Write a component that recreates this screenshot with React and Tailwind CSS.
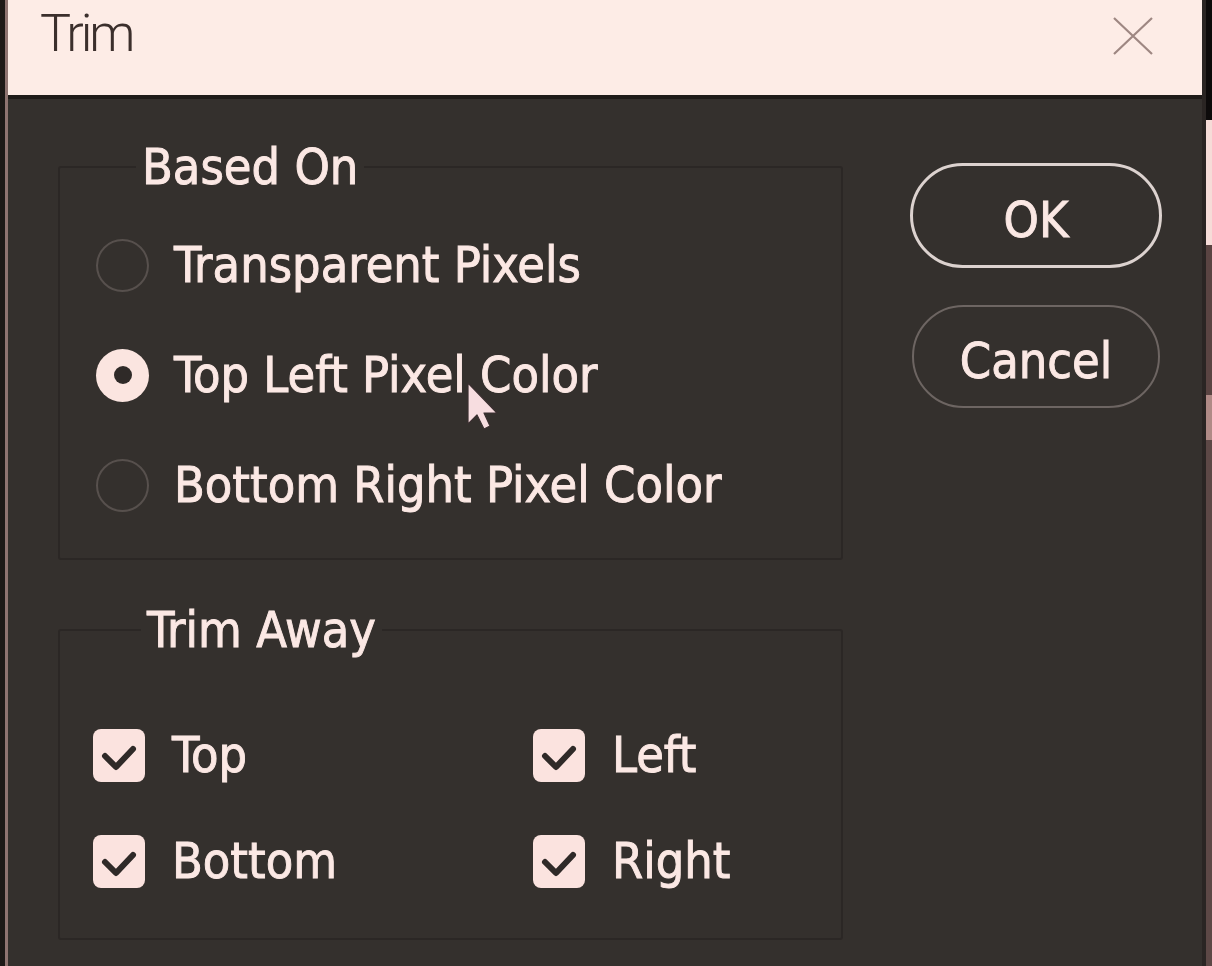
import React from 'react';

const body = "font-['DejaVu_Sans_Condensed','DejaVu_Sans',sans-serif] font-stretch-condensed text-[50px] leading-[56px] text-[#fbe8e4] [-webkit-text-stroke:0.9px_#fbe8e4]";

function Radio({ checked, label }) {
  return (
    <div className="flex h-[110px] items-center">
      {checked ? (
        <span className="flex h-[53px] w-[53px] shrink-0 items-center justify-center rounded-full bg-[#fbe5e0]">
          <span className="h-[18px] w-[18px] rounded-full bg-[#2f2a28]" />
        </span>
      ) : (
        <span className="h-[53px] w-[53px] shrink-0 rounded-full border-2 border-[#57504d]" />
      )}
      <span className="ml-[25px] whitespace-nowrap">{label}</span>
    </div>
  );
}

function Check({ label }) {
  return (
    <div className="flex h-[106px] items-center">
      <span className="flex h-[53px] w-[52px] shrink-0 items-center justify-center rounded-[8px] bg-[#fbe3df]">
        <svg width="52" height="53" viewBox="0 0 52 53" fill="none">
          <path d="M12 27 L23 38 L40 20" stroke="#2f2a28" strokeWidth="6" strokeLinecap="round" strokeLinejoin="round" />
        </svg>
      </span>
      <span className="ml-[27px] whitespace-nowrap">{label}</span>
    </div>
  );
}

export default function App() {
  return (
    <div className="flex h-[966px] w-[1212px] overflow-hidden bg-[#1d1917]">
      {/* left edge of the window behind */}
      <div className="w-[5px] bg-[#1d1917]" />
      <div className="w-[3px] bg-[#8f7471]" />

      {/* dialog */}
      <div className="flex w-[1194px] flex-col bg-[#34302d]">
        <div className="flex h-[95px] items-start justify-between bg-[#fdece6] pl-[32px]">
          <span className="pt-[4px] font-['Roboto',sans-serif] text-[52px] font-light leading-[60px] tracking-[-3px] text-[#3b2f2c]">
            Trim
          </span>
          <svg className="mr-[49px] mt-[17px]" width="40" height="38" viewBox="0 0 40 38" fill="none">
            <path d="M1 1 L39 37 M39 1 L1 37" stroke="#9e8782" strokeWidth="2.2" />
          </svg>
        </div>
        <div className="h-[4px] bg-[#1f1b19]" />

        <div className={`relative flex flex-1 pl-[50px] pt-[40px] ${body}`}>
          <div className="flex w-[785px] flex-col">
            <fieldset className="rounded-[3px] border-2 border-[#2b2725] pb-[18px] pl-[36px] pt-[15px]">
              <legend className="ml-[40px] px-[6px] leading-[56px]">Based On</legend>
              <Radio label="Transparent Pixels" />
              <Radio checked label="Top Left Pixel Color" />
              <Radio label="Bottom Right Pixel Color" />
            </fieldset>

            <fieldset className="mt-[42px] rounded-[3px] border-2 border-[#2b2725] pb-[24px] pl-[33px] pt-[44px]">
              <legend className="ml-[48px] px-[6px] leading-[56px]">Trim Away</legend>
              <div className="grid grid-cols-[440px_1fr]">
                <Check label="Top" />
                <Check label="Left" />
                <Check label="Bottom" />
                <Check label="Right" />
              </div>
            </fieldset>
          </div>

          <div className="ml-[67px] mt-[24px] flex flex-col">
            <button className="flex h-[105px] w-[252px] items-center justify-center rounded-full border-[3px] border-[#dcd2cf] pt-[8px]">
              OK
            </button>
            <button className="ml-[2px] mt-[37px] flex h-[103px] w-[248px] items-center justify-center rounded-full border-2 border-[#6d6562] pt-[8px]">
              Cancel
            </button>
          </div>

          {/* mouse pointer */}
          <svg className="absolute left-[459px] top-[283px]" width="32" height="50" viewBox="0 0 32 50" fill="none">
            <path d="M1 1 L1 42 L10 33 L17 47 L23 44 L17 31 L30 31 Z" fill="#f7dde0" stroke="#3a2f30" strokeWidth="1.2" strokeLinejoin="round" />
          </svg>
        </div>
      </div>

      {/* right edge: window behind */}
      <div className="w-[4px] bg-[#2a2523]" />
      <div className="flex w-[6px] flex-col">
        <div className="h-[120px] bg-[#0d0b0b]" />
        <div className="h-[125px] bg-[#f6dcd8]" />
        <div className="h-[150px] bg-[#5a4442]" />
        <div className="h-[45px] bg-[#b08a86]" />
        <div className="flex-1 bg-[#5d4846]" />
      </div>
    </div>
  );
}
